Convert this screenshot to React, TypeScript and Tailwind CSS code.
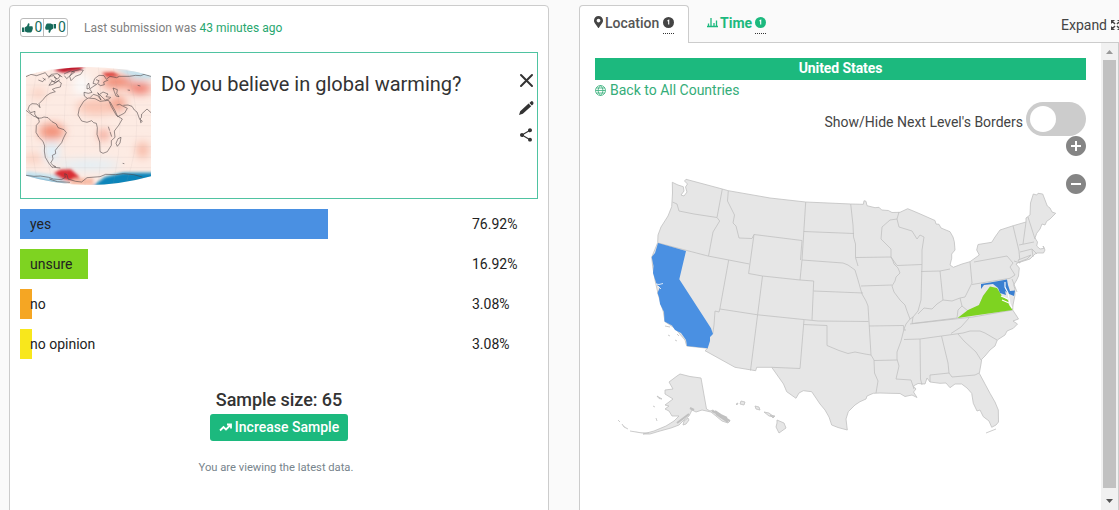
import type { ReactNode } from "react";
import { FaMapMarkerAlt } from "react-icons/fa";
import { MdAddCircle, MdRemoveCircle, MdShare } from "react-icons/md";

const results = [
  { label: "yes", percent: "76.92%", width: 307.5, color: "bg-[#4a90e2]" },
  { label: "unsure", percent: "16.92%", width: 67.5, color: "bg-[#7ed321]" },
  { label: "no", percent: "3.08%", width: 12, color: "bg-[#f5a623]" },
  { label: "no opinion", percent: "3.08%", width: 12, color: "bg-[#f8e71c]" },
];

const mainland =
  "M672.3 182.3L678 185L683.3 186.7L684 191L681 195L684 196L687 192L685.5 187L687.5 184L684.5 181L686 179.3L722.3 189L728.3 190.7L770 198L805.7 202L850.7 204L863.3 204.3L864 200.7L866 201.3L867 205.7L875 207.7L879 207.3L881.7 210L888.3 210.5L892 212.5L900 212.3L907.7 208.7L918 213L930 218.3L935 220.5L936 224L939 224.3L941 228L950 231.7L953 237L954.3 241.7L955 250L951.7 254L951.7 258.3L950 265L953.3 267.3L962 264L970 261.7L979.3 255L976.7 250L978 244.5L991.7 242.3L995 237L1000 230L1013.3 225.7L1026 222L1026 218L1030 215L1030.5 203L1033.3 194L1036.7 195L1038 193.3L1042.7 194L1047.3 206L1050 208L1052 212L1055.7 213.3L1050 219L1046.7 221.3L1045 225L1042 224L1040 229L1036.7 233.3L1035 238L1037.5 242L1036.7 246L1040 249L1044.3 248.3L1043 246L1045 250L1043.5 253L1037 253L1035 254L1030 259L1018.3 262.7L1016 264L1019.3 268L1018.5 276L1016.7 280L1013.7 285L1015 289L1015 295L1013 305L1012.7 310L1016 315L1018.5 319L1013 321L1017.5 324L1013.3 328.3L1007 331L1005 335L997.3 340L995 346L990 350L985 356L981.7 359.3L981 364L979.3 373.3L985 384L990 393.3L995 402L998.3 410L998.5 422L996 425L991.7 427.3L989 421L983.3 416.7L980 410L977 411L973.3 403.3L971.7 393.3L967 388L961.7 384L955 384L950 387.7L946 383L940 383.3L930 382L927 378L925 384L918 383.5L913.3 386L916 389L913.5 392L917 397.5L912 395L905 396.5L900 393.5L890 393.3L880 393L873.3 393.3L867 396L866 399L860 401.7L855 405L848.3 411.7L846 419L847.3 430L838 427.5L831.7 425L829 417L825 410L820 404L811.7 391.7L803.3 390.7L799 393L796 398.3L786.7 391.7L783.5 384L771.7 367.3L756.7 367.3L755.7 370.7L735 367.3L705 350.7L707.7 348.3L686.7 346L685 340L675 328.3L665 321.7L663.3 311.7L658.3 295L655 280L652.7 266.7L651.7 257.3L657.7 242.7L658 235L661 227L668 216L671.7 206.7L672.5 193Z";

const california =
  "M658 243L686 251L679.3 279.3L705.7 320L711 328.3L713 334L710 337L710 341L707.7 348.3L687 346L686 340L681 333L675 330L672 325.5L664.5 321.5L664 312L660 304L659 297L657.5 293L659.5 288L656.5 284L653 273L653.5 266L651.7 257L655 253Z";

const stateBorders =
  "M672.5 202L677 204L679 211L694 214L717 217.5L719.7 221L713 232L708.5 256 M717 217.5L722.3 189 M728.3 190.7L727.5 201L734.5 215L733 223L736 226L739 238L752 238.5L754 234.5L802 240.5L800.5 260 M658 243L708 256L749.5 264 M728.7 260L720 308L719 312L715 311L714 325L712.7 334 M720 309L757.6 314.8L818 321L868.5 321.5 M754 234.5L748.6 273.5L762.5 276L757.6 314.8L750.5 370.5 M762.5 276L800 280L813.7 281L812 320 M800 280L802 260L805.7 202 M803.7 231.5L854 233.5 M802 260L843 263L848 265L855 270L858 280L862 294L866 301L868 306L869 322L871 355L865 354L855 352L848 353.5L839 350.5L827 345.5L827 325.5L803.5 324.5 M804 320L800 368.5L771.7 367.3 M813.7 291L863 293 M850.7 204L853 225L853.5 237L855.5 244L855.5 257.5L858 266 M855.5 257.5L891 257L893 261L894 264L898 268L900 273L896 277L895 281L892 286L894 292L900 300L905 305L907 311L910 319L906 324L904 329L901 341L897 352L897 359L899 366L896 379L911 380L914 389 M861 286L892 285 M869 326L903.5 325.5L904 330L906 330 M871 355L874 360L874.5 373L878 381L876 393 M874 360.5L897 360 M890 220L882 227L881 239L891 249L891 257L897 265.5L922 264.5 M890 220L897 219L899 212 M897 219L899 227L912 231L917 239L920 235L924 237L922 250L922 264.5L921 300L918 311L913 317L910 319 M921 271.5L940 271L950 269 M940 271L943 300L937 304L932 309L924 308L918 314 M943 300L952 301L960 298L965 297L970 287L972 283L970 261.7 M972 284.5L1010 278.3L1015 275L1010 267L1013 263L1007 256L974 262 M913 317L912 323.5L957 318 M910 324L973 317L1012.7 310 M904 339.5L920 339L941.5 336L963 333L970 331L980 331L985 333L997 340 M969 318L961 327L951 333.5 M920 339L920.5 379L922 385 M941.5 336L948 363L949 373L930 375L930 382 M949 373L952 377L975 375L979 373 M958 334L964 341L976 352L981 360 M960 298L962 306L958 310L957 318 M962 306L968 311L979 306L984 295L991 287 M1013 225.7L1019 251L1020 263L1014 261 M1019 245L1034 242 M1026 222L1023 244 M1028 217L1035 239 M1020 252L1032 249L1037 254 M1032 249L1033 257 M1012 279L1017 292";

const alaska =
  "M680 374L684 375L690 376.5L701 378L706.5 409L710 411L713 410L718 414L724 418L730 421L728 423L722 421L716 416L711 412L702 410L696 412L692 410L689 416L684 420L679 425L671 428L660 431L650 434L643 434L654 431L666 426L674 421L679 416L672 416L669 411L665 409L669 406L665 405L673 399L665 394L665 390L673 389L669 382L673 379L677 376Z";

const Panel = ({ children }: { children: ReactNode }) => (
  <section className="h-[520px] w-[540px] shrink-0 rounded-t border border-[#ccc] bg-white">{children}</section>
);

const Thumb = ({ className = "" }: { className?: string }) => (
  <svg className={`h-[10px] w-[11px] shrink-0 ${className}`} viewBox="0 0 11 10">
    <path d="M0 4.5H2.4V9H0ZM3 4.3L5 3L6 .5Q7.3 -.3 7.5 1.2L7.1 3.3H10Q11 3.7 10.6 4.6Q11.2 5.4 10.5 6.2Q10.8 7.1 10 7.7Q10 9.4 8.6 9.5H5.3L3 8.5Z" fill="currentColor" />
  </svg>
);

const WorldThumbnail = () => (
  <svg className="h-[118px] w-[125px] shrink-0" viewBox="48 66 375 354">
    <defs>
      <clipPath id="globe">
        <path d="M48 91Q130 67 235 66Q340 67 423 92V394Q330 420 235 420Q130 417 48 392Z" />
      </clipPath>
      <filter id="soft" filterUnits="userSpaceOnUse" x="0" y="0" width="480" height="480">
        <feGaussianBlur stdDeviation="14" />
      </filter>
      <filter id="slight" filterUnits="userSpaceOnUse" x="0" y="0" width="480" height="480">
        <feGaussianBlur stdDeviation="5" />
      </filter>
    </defs>
    <g clipPath="url(#globe)">
      <path fill="#fdebe3" d="M48 66h375v354H48z" />
      <g filter="url(#soft)">
        <ellipse cx="125" cy="260" rx="38" ry="24" fill="#f28e76" />
        <ellipse cx="260" cy="185" rx="60" ry="25" fill="#fac4b2" />
        <ellipse cx="320" cy="110" rx="46" ry="18" fill="#f08169" />
        <ellipse cx="390" cy="130" rx="34" ry="15" fill="#ec6858" />
        <ellipse cx="325" cy="175" rx="22" ry="23" fill="#f39a83" />
        <ellipse cx="280" cy="270" rx="13" ry="14" fill="#ee7964" />
        <ellipse cx="398" cy="315" rx="18" ry="23" fill="#f7b29e" />
        <ellipse cx="70" cy="340" rx="30" ry="12" fill="#fac9b8" />
        <ellipse cx="85" cy="145" rx="24" ry="12" fill="#fac9b8" />
        <ellipse cx="215" cy="120" rx="25" ry="34" fill="#fafafa" />
        <ellipse cx="125" cy="320" rx="23" ry="30" fill="#dceffa" />
        <ellipse cx="235" cy="360" rx="95" ry="15" fill="#e0f0f8" />
        <ellipse cx="390" cy="84" rx="45" ry="12" fill="#a7d6e8" />
      </g>
      <g filter="url(#slight)">
        <path fill="#bd162c" d="M130 76L180 60H225L210 76L160 83Z" />
        <path fill="#dd453f" d="M275 83L310 82L330 94L290 96Z" />
        <path fill="#c6e3ef" d="M310 70L423 88V99L350 86Z" />
        <path fill="#c8e4ef" d="M48 378L150 392L170 414L48 395Z" />
        <path fill="#d92f35" d="M130 386L150 374L182 373L205 393L215 408L160 405Z" />
        <path fill="#f8bda8" d="M190 400H250V420H180Z" />
        <path fill="#0785ba" d="M240 430L285 396L340 383L440 383V430Z" />
        <path fill="#3d9fc8" d="M40 392L110 404L170 418V430H40Z" />
      </g>
      <path
        className="fill-none stroke-[#a9a5a5]"
        strokeOpacity=".3"
        d="M48 120H423M48 150H423M48 180H423M48 211H423M48 242H423M48 274H423M48 305H423M48 337H423M48 368H423M80 80Q45 240 80 400M125 70Q85 240 125 410M175 66Q150 240 175 418M225 66V420M265 66Q285 240 265 420M310 68Q350 240 310 417M350 75Q410 240 350 409"
      />
      <g className="fill-none stroke-[#4b4344]" strokeWidth="1.9" strokeOpacity=".9" strokeLinejoin="round">
        <path d="M48 95L63 88L80 92L97 86L106 83L114 94L132 92L139 102L133 111L126 108L117 121L129 118L145 108L154 114L151 126L137 129L127 133L136 140L120 145L108 153L99 164L87 176L90 188L81 177L66 176L58 182L54 193L62 203L75 199L74 207L82 220L94 219L102 216L114 218L126 230L139 237L144 248L162 254L169 263L161 278L155 293L143 307L136 316L137 326L127 331L129 342L122 354L129 361L137 365L126 367L116 354L106 337L103 318L104 303L99 289L86 276L78 262L79 241L88 231L85 218L72 214L57 203L48 196" />
        <path d="M115 100L124 88L142 86L151 92L143 102L132 97M162 87L181 78L194 81L179 93L170 101L163 92M179 94L188 79L209 74L220 76L212 88L196 94L183 107Z M85 105L98 110L106 101M122 104L135 113L150 104M98 99L107 105M145 89L157 96" />
        <path d="M232 160L223 153L222 142L235 145L246 142L239 132L249 125L260 118L249 115L254 101L267 91L282 92L289 103L300 94L320 98L328 94L358 94L377 91L392 92L402 88L423 94M258 104L267 107L263 116L272 122L283 119L281 111L295 105M231 122L236 114L239 129L231 132Z" />
        <path d="M240 158L250 148L263 152L273 165L263 143L279 159L286 165L299 161L302 157L288 155L294 147L279 141L269 148M234 159L221 169L208 190L204 210L215 228L231 232L245 227L251 233L259 235L262 248L261 268L269 291L270 320L279 325L292 320L304 301L304 287L315 277L313 258L326 241L337 222L319 211L304 185L296 166L270 169L255 161Z" />
        <path d="M300 170L315 197L323 215L344 204L352 190L340 184L329 178L320 180M340 181L354 180L366 184L373 195L381 201L389 223L394 218L395 207L411 192L423 203M324 281L333 277L330 294L322 304L318 295ZM309 129L322 134L320 146L327 155L318 153L313 140ZM391 223L397 229L392 233Z" />
        <path d="M48 391L72 394L91 393L116 397L130 402L154 404L166 397L164 386L171 389L174 402L197 409L215 411L231 398L270 395L287 388L317 389L340 386L371 389L397 396M118 402L142 410L180 412M133 367L151 369M338 355l5 1M295 245l4 12M300 260l5 15M383 121l8 2M353 135l7 1" />
      </g>
    </g>
  </svg>
);

const UnitedStatesMap = () => (
  <svg className="ml-[15px] h-[270px] w-[460px]" viewBox="610 170 460 270">
    <g className="fill-[#e6e6e6] stroke-[#c0c0c0]" strokeWidth=".8" strokeLinejoin="round">
      <path d={mainland} />
      <path d={stateBorders} className="fill-none" />
      <path d={alaska} />
      <path d="M777 420L784 423L786 428L779 433L776 427L777 423ZM755 406l4 1 1 3-4-1zM764 412l5 1 5 4-5-1zM741 401l4 1-1 3-4-1zM736 404l2-1-1 2zM770 415l5 1-2 2z" />
      <path d="M684 421l4-3 1 2-3 4-3 1zM657 396l5 3-3-.5zM653 406l2 1M656 418l1 3M618 420l2 2M622 424l2 3 4 2M630 431l6 1 6 1 7 0M665 326l5 1M668 335l2 1M677 334l2 2M675 340l2 1M986 433l5-2 5-2" />
      <path d="M715 411L730 421M716 414L728 422M712 411L727 418M690 408L694 410M677 423L689 414" strokeWidth="2" />
      <path d="M1018 260l8-3 5-2-4 4-8 3z" />
    </g>
    <path d={california} fill="#4a90e2" />
    <path d="M656 284l3 .5 4-1M658 286l3 3" className="fill-none stroke-white" strokeWidth=".8" />
    <path d="M957.5 318L968 310L979 305L983 296L990 286.5L997 288L1002 296L1008 300L1009 305L1012.5 310Z" fill="#7ed321" />
    <path
      d="M981 284L990 282.5L1007 279.5L1008 285L1010 291L1015 290.5L1014 296L1009 294L1005 291L1006 295L1000 293L998 288L993 284L984 285L981 289Z"
      fill="#397fd1"
    />
    <path d="M1005 282l0 5 3 6 2 11 2 4M1001 296l7 3M1002 300l7 3" className="fill-none stroke-white" strokeWidth="1.1" />
  </svg>
);

const InfoMark = ({ className }: { className: string }) => (
  <span className="h-[17px] border-b border-dotted border-[#333]">
    <svg className={`size-[11px] ${className}`} viewBox="0 0 11 11">
      <circle cx="5.5" cy="5.5" r="5.5" fill="currentColor" />
      <path d="M4.5 4L5.7 3.3V7.5" fill="none" stroke="#fff" strokeWidth="1.1" />
    </svg>
  </span>
);

const ResultsCard = () => (
  <Panel>
    <div className="flex h-[46px] items-center pl-[10px]">
      <div className="mt-[-3px] flex h-[19px] w-[48px] items-center rounded-[3px] border border-[#bbb] text-[14px] text-[#176b5b]">
        <span className="flex h-full w-[23px] items-center justify-center gap-[2px] border-r border-[#bbb]">
          <Thumb />0
        </span>
        <span className="flex h-full w-[23px] items-center justify-center gap-[2px]">
          <Thumb className="rotate-180" />0
        </span>
      </div>
      <p className="mt-[-3px] ml-[16px] text-[12px] text-[#808080]">
        Last submission was <span className="text-[#28a76f]">43 minutes ago</span>
      </p>
    </div>
    <div className="ml-[10px] flex h-[147px] w-[518px] border border-[#4fc3a1] pt-[14px] pl-[5px]">
      <WorldThumbnail />
      <h1 className="ml-[10px] pt-[3px] text-[20px] leading-[28px] text-[#333]">Do you believe in global warming?</h1>
      <div className="mt-[6px] mr-[3px] ml-auto flex flex-col items-center text-[#333]">
        <svg className="size-[15px]" viewBox="0 0 15 15">
          <path d="M2 2L13 13M13 2L2 13" fill="none" stroke="currentColor" strokeWidth="2" strokeLinecap="round" />
        </svg>
        <svg className="mt-[12px] size-[16px]" viewBox="0 0 16 16">
          <path d="M1 15L2.2 11.2L10.6 3.6L13.2 6.2L4.8 13.8ZM11.4 2.9L13 1.4Q14 .7 15 1.7T15.2 4.2L13.9 5.5Z" fill="currentColor" />
        </svg>
        <MdShare className="mt-[11px] size-[16px]" />
      </div>
    </div>
    <div className="mt-[10px] ml-[10px] flex flex-col gap-[10px]">
      {results.map((item) => (
        <div key={item.label} className="flex h-[30px] items-center text-[14px] text-[#222]">
          <div className="w-[452px]">
            <div className={`flex h-[30px] items-center pl-[10px] whitespace-nowrap ${item.color}`} style={{ width: item.width }}>
              {item.label}
            </div>
          </div>
          <span>{item.percent}</span>
        </div>
      ))}
    </div>
    <div className="mt-[29px] flex flex-col items-center">
      <p className="text-[18px] leading-[24px] font-medium tracking-[-0.05px] text-[#333]">Sample size: 65</p>
      <button className="mt-[2px] flex h-[27px] w-[138px] items-center justify-center gap-[3px] rounded-[3px] bg-[#1cb97e] text-[14px] font-medium text-white">
        <svg className="h-[9px] w-[13px]" viewBox="0 0 13 9">
          <path d="M1 7.5L4.5 4L7 6.5L11.5 2M8 1.5H12V5.5" fill="none" stroke="currentColor" strokeWidth="1.8" />
        </svg>
        Increase Sample
      </button>
      <p className="mt-[18px] mr-[6px] text-[11.2px] leading-[17px] text-[#77848c]">You are viewing the latest data.</p>
    </div>
  </Panel>
);

const LocationPanel = () => (
  <section className="h-[510px] w-[540px] shrink-0">
    <div className="flex h-[38px] text-[14px]">
      <div className="relative z-10 flex w-[110px] items-start rounded-t border border-b-0 border-[#ccc] bg-white pt-[8px] pl-[14px] font-medium text-[#555]">
        <FaMapMarkerAlt className="mt-[2px] mr-[2px] h-[12px] w-[9px] text-[#444]" />
        <span className="mr-[4px] leading-[18px]">Location</span>
        <div className="mt-[3px] flex">
          <InfoMark className="text-[#444]" />
        </div>
      </div>
      <div className="flex items-start pt-[9px] pl-[18px] font-bold text-[#1cb97e]">
        <svg className="mt-[3px] mr-[2px] h-[11px] w-[11px]" viewBox="0 0 11 11">
          <path d="M1.5 10V6.5M4 10V1M7 10V6M9.5 10V3.5M0 9.5H11" fill="none" stroke="currentColor" strokeWidth="1.3" />
        </svg>
        <span className="mr-[3px] leading-[18px]">Time</span>
        <div className="mt-[3px] flex">
          <InfoMark className="text-[#1cb97e]" />
        </div>
      </div>
      <div className="mt-[11px] ml-auto flex h-[18px] w-[58px] items-center gap-[4px] overflow-hidden text-[#444]">
        Expand
        <svg className="size-[10px] shrink-0" viewBox="0 0 10 10">
          <path d="M0 0H4L0 4ZM6 0H10V4ZM0 6V10H4ZM10 6V10H6ZM1 2L2 1L4.5 3.5L3.5 4.5ZM9 2L8 1L5.5 3.5L6.5 4.5ZM1 8L2 9L4.5 6.5L3.5 5.5ZM9 8L8 9L5.5 6.5L6.5 5.5Z" fill="currentColor" />
        </svg>
      </div>
    </div>
    <div className="mt-[-1px] flex h-[480px] border border-[#ccc] bg-white">
      <div className="w-[521px] pt-[15px] pl-[15px] text-[14px]">
        <h2 className="flex h-[22px] w-[491px] items-center justify-center bg-[#1cb97e] pb-[1px] font-bold tracking-[-0.08px] text-white">
          United States
        </h2>
        <a className="flex h-[21px] items-center gap-[4px] text-[#35ad79]">
          <svg className="size-[11px]" viewBox="0 0 11 11">
            <path d="M5.5 .5A5 5 0 1 0 5.5 10.5A5 5 0 1 0 5.5 .5ZM1 3H10M.5 5.5H10.5M1 8H10M5.5 .5Q.5 5.5 5.5 10.5M5.5 .5Q10.5 5.5 5.5 10.5" fill="none" stroke="currentColor" strokeWidth=".8" />
          </svg>
          Back to All Countries
        </a>
        <div className="flex w-[491px] items-center justify-end gap-[3px] pt-[1px] text-[#444]">
          <span className="pt-[6px]">Show/Hide Next Level's Borders</span>
          <button className="flex h-[34px] w-[60px] items-center rounded-full bg-[#ccc] pl-[4px]">
            <span className="size-[26px] rounded-full bg-white" />
          </button>
        </div>
        {/* The map slides under the zoom buttons */}
        <div className="relative z-10 flex w-[493px] flex-col items-end gap-[14px] text-[#858585]">
          <MdAddCircle className="mt-[-2px] size-[24px]" />
          <MdRemoveCircle className="size-[24px]" />
        </div>
        <div className="mt-[-26px]">
          <UnitedStatesMap />
        </div>
      </div>
      <div className="flex w-[17px] flex-col items-center bg-[#f1f1f1]">
        <svg className="h-[17px] w-[17px] shrink-0" viewBox="0 0 17 17">
          <path d="M5 11L8.5 7L12 11Z" fill="#999" />
        </svg>
        <div className="h-[428px] w-[13px] bg-[#c1c1c1]" />
        <svg className="mt-[4px] h-[17px] w-[17px] shrink-0" viewBox="0 0 17 17">
          <path d="M5 7H12L8.5 11Z" fill="#555" />
        </svg>
      </div>
    </div>
  </section>
);

const App = () => {
  return (
    <main className="flex h-[510px] w-[1119px] gap-[30px] overflow-hidden bg-[#fafafa] pt-[5px] pl-[9px] font-[Roboto,sans-serif]">
      <ResultsCard />
      <LocationPanel />
    </main>
  );
};

export default App;
